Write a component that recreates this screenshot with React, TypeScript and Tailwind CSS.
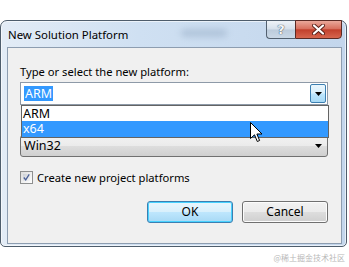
import React from "react";

const font = { fontFamily: '"Segoe UI", "Noto Sans", "Open Sans", sans-serif' };

function Arrow() {
  return (
    <svg width="7" height="4" viewBox="0 0 7 4">
      <path d="M0 0 H7 L3.5 4 Z" fill="#000" />
    </svg>
  );
}

export default function App() {
  return (
    <div className="w-[349px] h-[267px] bg-white relative overflow-hidden text-[11.2px] text-black" style={font}>
      {/* window */}
      <div className="mt-[20px] w-[347px] h-[227px] rounded-t-[7px] rounded-b-[5px] border border-[#4e5d6c] bg-[linear-gradient(90deg,#e3ecf6_0%,#cfe0f2_40%,#c3d6ec_100%)] flex flex-col shadow-[inset_0_0_0_1px_rgba(255,255,255,0.6)]">
        {/* title bar */}
        <div className="h-[26px] flex items-start relative">
          <div className="pl-[7px] pt-[6px] text-[11.4px] leading-[15px] text-black">New Solution Platform</div>
          <div className="absolute left-[180px] top-[8px] w-[46px] h-[8px] rounded-full bg-[#9fb4cc] blur-[3px] opacity-60" />
          <div className="ml-auto flex mr-[4px] -mt-px">
            <div className="w-[29px] h-[19px] rounded-bl-[4px] border border-[#52606f] border-r-0 bg-[linear-gradient(180deg,#eef3f8_0%,#d5e0eb_48%,#bccbdb_52%,#cad8e6_100%)] flex items-center justify-center">
              <span className="text-[13px] leading-none font-bold text-[#f4f7fa] [text-shadow:0_0_1px_#3b4a5a,0_0_1px_#3b4a5a]" style={{ fontFamily: '"DejaVu Sans", sans-serif' }}>?</span>
            </div>
            <div className="w-[47px] h-[19px] rounded-br-[4px] border border-[#5a2a24] bg-[linear-gradient(180deg,#eaa89a_0%,#d8715f_45%,#c2402c_52%,#d6664e_100%)] flex items-center justify-center">
              <svg width="13" height="11" viewBox="0 0 13 11">
                <path d="M2 1.5 L11 9.5 M11 1.5 L2 9.5" stroke="#5a2018" strokeWidth="4" strokeLinecap="round" />
                <path d="M2 1.5 L11 9.5 M11 1.5 L2 9.5" stroke="#ffffff" strokeWidth="2.2" strokeLinecap="round" />
              </svg>
            </div>
          </div>
        </div>
        {/* client */}
        <div className="ml-[6px] mr-[4px] h-[197px] border border-[#8d9db0] bg-[#f0f0f0] relative">
          <div className="pl-[12px] pt-[16px] flex flex-col">
            <div className="leading-[16px]">Type or select the new platform:</div>
            {/* combo 1 */}
            <div className="mt-[2px] w-[308px] h-[23px] border border-[#8e9aa8] bg-white flex items-center">
              <div className="ml-[3px] px-[1px] h-[15px] leading-[15px] bg-[#3399ff] text-white text-[12.5px]">ARM</div>
              <div className="ml-auto mr-px w-[16px] h-[19px] border border-[#3c7fb1] rounded-[2px] bg-[linear-gradient(180deg,#eaf6fd_0%,#d9f0fc_48%,#bee6fd_52%,#a7d9f5_100%)] flex items-center justify-center">
                <Arrow />
              </div>
            </div>
            {/* space under the open list */}
            <div className="h-[30px]" />
            {/* combo 2 */}
            <div className="w-[308px] h-[22px] border border-[#707070] rounded-[3px] bg-[linear-gradient(180deg,#f2f2f2_0%,#ebebeb_48%,#dddddd_52%,#cfcfcf_100%)] flex items-center pl-[3px] pr-[5px] text-[12.5px]">
              <span>Win32</span>
              <span className="ml-auto"><Arrow /></span>
            </div>
            {/* checkbox */}
            <div className="mt-[13px] flex items-center gap-[4px]">
              <div className="w-[13px] h-[13px] border border-[#8e8f8f] bg-[linear-gradient(135deg,#dcdcdc,#ffffff)] p-[2px]">
                <div className="w-full h-full bg-[linear-gradient(135deg,#cbcfd5,#f6f6f6)] flex items-center justify-center">
                  <svg width="9" height="9" viewBox="0 0 9 9">
                    <path d="M1 4.5 L3.5 7.5 L8 0.5" stroke="#4a5f97" strokeWidth="1.6" fill="none" />
                  </svg>
                </div>
              </div>
              <span className="leading-[15px]">Create new project platforms</span>
            </div>
            {/* buttons */}
            <div className="mt-[16px] w-[308px] flex justify-end gap-[9px]">
              <div className="w-[86px] h-[22px] rounded-[3px] border border-[#3c7fb1] bg-[linear-gradient(180deg,#eaf6fd_0%,#d9f0fc_48%,#bee6fd_52%,#a7d9f5_100%)] shadow-[inset_0_0_0_1px_#48d2ff] flex items-center justify-center text-[12px]">OK</div>
              <div className="w-[86px] h-[22px] rounded-[3px] border border-[#707070] bg-[linear-gradient(180deg,#f2f2f2_0%,#ebebeb_48%,#dddddd_52%,#cfcfcf_100%)] shadow-[inset_0_0_0_1px_#fcfcfc] flex items-center justify-center text-[12px]">Cancel</div>
            </div>
          </div>
          {/* dropdown list overlay */}
          <div className="absolute left-[13px] top-[57px] w-[308px] h-[33px] border border-[#646464] bg-white flex flex-col text-[12.5px]">
            <div className="h-[15px] leading-[15px] pl-[1px] overflow-hidden">ARM</div>
            <div className="h-[16px] leading-[16px] pl-[1px] bg-[#3399ff] text-white overflow-hidden">x64</div>
          </div>
          {/* cursor */}
          <svg className="absolute left-[242px] top-[74px]" width="13" height="21" viewBox="0 0 13 21">
            <path d="M0.5 0.5 L0.5 16.5 L4.5 12.8 L7.3 19.5 L9.6 18.5 L6.9 12 L12 12 Z" fill="#fff" stroke="#000" strokeWidth="1" strokeLinejoin="round" />
          </svg>
        </div>
      </div>
      <div className="absolute right-[4px] bottom-[4px] text-[8px] leading-[10px] text-[#b8b8b8]" style={{ fontFamily: '"Noto Sans CJK SC", sans-serif' }}>@稀土掘金技术社区</div>
    </div>
  );
}
